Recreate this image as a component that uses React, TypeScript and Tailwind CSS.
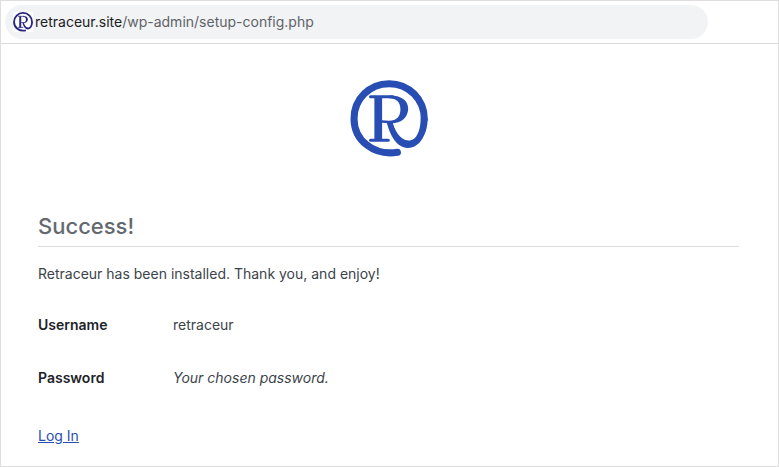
type LogoProps = { className: string; title?: string };

function Logo({ className, title }: LogoProps) {
  return (
    <svg
      viewBox="44 32 232 232"
      fill="none"
      stroke="currentColor"
      className={className}
      role={title ? "img" : undefined}
      aria-label={title}
      aria-hidden={title ? undefined : true}
    >
      <path
        d="M185 247 C115 258 56 212 56 147 C56 89 102 43 160 43 C220 43 265 90 265 148"
        strokeWidth="21"
        strokeLinecap="round"
      />
      <path
        d="M152 155 L170 155 C176 180 192 212 218 212 C244 212 254 178 254 147 H275 C275 188 254 234 216 234 C182 234 163 196 152 155 Z"
        fill="currentColor"
        stroke="none"
      />
      <path d="M128 82 V211" strokeWidth="23" />
      <path d="M105 82 H172 M105 211 H158" strokeWidth="9" strokeLinecap="round" />
      <path
        d="M162 78 C196 78 217 92 217 117 C217 144 195 163 162 161 L139 159 V152 L160 153 C183 153 194 141 194 119 C194 97 181 86 160 86 Z"
        fill="currentColor"
        stroke="none"
      />
    </svg>
  );
}

const credentials = [
  { label: "Username", value: "retraceur", italic: false },
  { label: "Password", value: "Your chosen password.", italic: true },
];

export default function App() {
  return (
    <div className="flex min-h-screen flex-col border border-[#dedede] bg-white font-['Inter','Liberation_Sans',sans-serif] text-sm text-[#3c434a]">
      <header className="border-b border-[#dadada] py-1 pr-[70px] pl-1">
        <div className="flex h-[34px] items-center gap-[2px] rounded-full bg-[#f1f3f4] pl-2">
          <span className="flex size-5 items-center justify-center bg-white">
            <Logo className="size-5 text-[#28257e]" />
          </span>
          <p className="text-sm text-[#5f6368]">
            <span className="text-[#202124]">retraceur.site</span>/wp-admin/setup-config.php
          </p>
        </div>
      </header>

      <main className="flex flex-col pt-[36px] pr-[39px] pl-[37px]">
        <Logo className="size-[78px] self-center text-[#284db3]" title="Retraceur" />
        <h1 className="mt-[52px] border-b border-[#dcdcde] pb-1 text-[22px] leading-8 font-medium text-[#646970]">
          Success!
        </h1>
        <p className="mt-4 leading-[22px]">Retraceur has been installed. Thank you, and enjoy!</p>
        <table className="mt-[13px] w-full table-fixed border-collapse text-left">
          <tbody>
            {credentials.map((item) => (
              <tr key={item.label} className="h-[53px]">
                <th scope="row" className="w-[135px] p-0 font-semibold text-[#1d2327]">
                  {item.label}
                </th>
                <td className="p-0">{item.italic ? <em>{item.value}</em> : item.value}</td>
              </tr>
            ))}
          </tbody>
        </table>
        <p className="mt-[21px] leading-[22px]">
          <a href="#login" className="text-[#284db3] underline">
            Log In
          </a>
        </p>
      </main>
    </div>
  );
}
